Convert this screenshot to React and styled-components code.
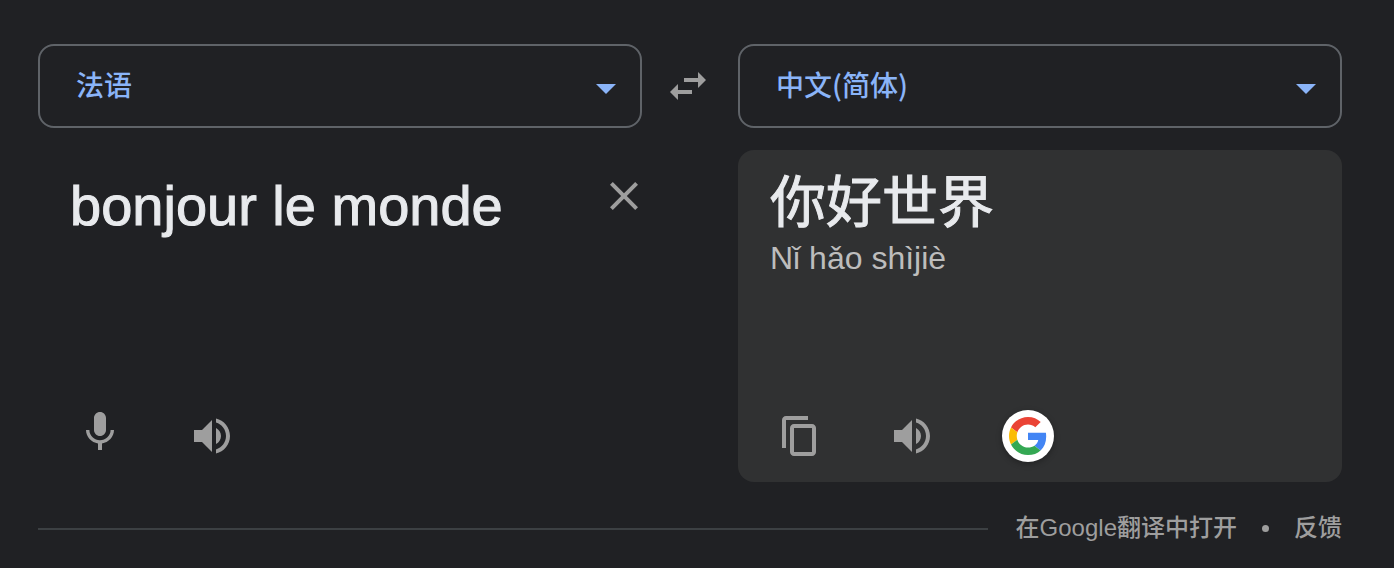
import React, { useState } from "react";
import styled, { createGlobalStyle } from "styled-components";

const GlobalStyle = createGlobalStyle`
  *, *::before, *::after { box-sizing: border-box; }
  body {
    margin: 0;
    background: #202124;
    color: #e8eaed;
    font-family: "Liberation Sans", "Noto Sans CJK SC", sans-serif;
  }
`;

const Page = styled.main`
  padding: 44px 52px 20px 38px;
`;

const Columns = styled.div`
  display: grid;
  grid-template-columns: minmax(0, 1fr) 96px minmax(0, 1fr);
  row-gap: 22px;
`;

const Picker = styled.label`
  position: relative;
  display: block;
`;

const Select = styled.select`
  display: block;
  width: 100%;
  height: 84px;
  padding: 0 80px 4px 36px;
  border: 2px solid #5f6368;
  border-radius: 16px;
  appearance: none;
  background: transparent;
  color: #8ab4f8;
  font-family: "Noto Sans CJK SC", sans-serif;
  font-size: 28px;
  font-weight: 500;
  cursor: pointer;

  option { background: #303132; }
`;

const Arrow = styled.svg`
  position: absolute;
  top: 40px;
  right: 26px;
  width: 20px;
  height: 10px;
  fill: #8ab4f8;
  pointer-events: none;
`;

const IconButton = styled.button`
  display: flex;
  align-items: center;
  justify-content: center;
  flex: none;
  width: 48px;
  height: 48px;
  padding: 0;
  border: 0;
  background: transparent;
  color: #9e9e9e;
  cursor: pointer;
`;

const SwapCell = styled.div`
  display: flex;
  align-items: center;
  justify-content: center;
  padding-right: 4px;
`;

const Glyph = styled.svg`
  display: block;
  width: 48px;
  height: 48px;
  fill: currentColor;
`;

const Panel = styled.section`
  grid-column: ${(p) => (p.$result ? 3 : 1)};
  display: flex;
  flex-direction: column;
  justify-content: space-between;
  min-height: 332px;
  padding: ${(p) => (p.$result ? "16px 32px 20px" : "22px 0 20px 32px")};
  border-radius: 16px;
  background: ${(p) => (p.$result ? "#303132" : "transparent")};
`;

const SourceRow = styled.div`
  display: flex;
  align-items: flex-start;
`;

const SourceText = styled.textarea`
  flex: 1;
  min-width: 0;
  height: 192px;
  padding: 0;
  border: 0;
  outline: 0;
  resize: none;
  background: transparent;
  color: #e8eaed;
  font-family: "Liberation Sans", "Noto Sans CJK SC", sans-serif;
  font-size: 56px;
  line-height: 68px;
  -webkit-text-stroke: 1px currentColor;
`;

const ClearSlot = styled.div`
  margin-right: -6px;
`;

const Translation = styled.p`
  margin: 0;
  font-family: "Noto Sans CJK SC", sans-serif;
  font-size: 56px;
  line-height: 64px;
  -webkit-text-stroke: 1px currentColor;
`;

const Pinyin = styled.p`
  margin: 8px 0 0;
  color: #bdbdbd;
  font-size: 32px;
  line-height: 40px;
`;

const Tools = styled.div`
  display: flex;
  align-items: center;
  gap: 64px;
  height: 52px;
  padding-left: 6px;
`;

const MicButton = styled(IconButton)`
  align-self: flex-start;
  height: 44px;
`;

const GoogleButton = styled(IconButton)`
  width: 52px;
  height: 52px;
  margin-left: 2px;
  border-radius: 50%;
  background: #fff;
  box-shadow: 0 2px 6px rgba(0, 0, 0, 0.3);
`;

const Footer = styled.footer`
  display: flex;
  align-items: center;
  gap: 28px;
  padding-top: 28px;
`;

const Rule = styled.hr`
  flex: 1;
  height: 2px;
  margin: 2px 0 0;
  border: 0;
  background: #3c4043;
`;

const Links = styled.nav`
  display: flex;
  align-items: center;
  gap: 25px;
  color: #9e9e9e;
  font-size: 24px;
  font-weight: 500;
  line-height: 36px;
`;

const FooterLink = styled.a`
  color: inherit;
  text-decoration: none;
`;

const Dot = styled.span`
  width: 7px;
  height: 7px;
  border-radius: 50%;
  background: #9e9e9e;
`;

const paths = {
  swap: "M6.99 11L3 15l3.99 4v-3H14v-2H6.99v-3zM21 9l-3.99-4v3H10v2h7.01v3L21 9z",
  close:
    "M19 6.41L17.59 5 12 10.59 6.41 5 5 6.41 10.59 12 5 17.59 6.41 19 12 13.41 17.59 19 19 17.59 13.41 12z",
  mic: "M12 14c1.66 0 3-1.34 3-3V5c0-1.66-1.34-3-3-3S9 3.34 9 5v6c0 1.66 1.34 3 3 3zm5.3-3c0 3-2.54 5.1-5.3 5.1S6.7 14 6.7 11H5c0 3.41 2.72 6.23 6 6.72V21h2v-3.28c3.28-.48 6-3.3 6-6.72h-1.7z",
  volume:
    "M3 9v6h4l5 5V4L7 9H3zm13.5 3c0-1.77-1.02-3.29-2.5-4.03v8.05c1.48-.73 2.5-2.25 2.5-4.02zM14 3.23v2.06c2.89.86 5 3.54 5 6.71s-2.11 5.85-5 6.71v2.06c4.01-.91 7-4.49 7-8.77s-2.99-7.86-7-8.77z",
  copy: "M16 2H5c-1.1 0-2 .9-2 2v14h2V4h11V2zm2 4H9c-1.1 0-2 .9-2 2v12c0 1.1.9 2 2 2h9c1.1 0 2-.9 2-2V8c0-1.1-.9-2-2-2zm0 14H9V8h9v12z",
};

const Icon = ({ name }) => (
  <Glyph viewBox="0 0 24 24" aria-hidden="true">
    <path d={paths[name]} />
  </Glyph>
);

const GoogleLogo = () => (
  <svg width="38" height="38" viewBox="0 0 48 48" aria-hidden="true">
    <path fill="#EA4335" d="M24 9.5c3.54 0 6.71 1.22 9.21 3.6l6.85-6.85C35.9 2.38 30.47 0 24 0 14.62 0 6.51 5.38 2.56 13.22l7.98 6.19C12.43 13.72 17.74 9.5 24 9.5z" />
    <path fill="#4285F4" d="M46.98 24.55c0-1.57-.15-3.09-.38-4.55H24v9.02h12.94c-.58 2.96-2.26 5.48-4.78 7.18l7.73 6c4.51-4.18 7.09-10.36 7.09-17.65z" />
    <path fill="#FBBC05" d="M10.53 28.59c-.48-1.45-.76-2.99-.76-4.59s.27-3.14.76-4.59l-7.98-6.19C.92 16.46 0 20.12 0 24c0 3.88.92 7.54 2.56 10.78l7.97-6.19z" />
    <path fill="#34A853" d="M24 48c6.48 0 11.93-2.13 15.89-5.81l-7.73-6c-2.15 1.45-4.92 2.3-8.16 2.3-6.26 0-11.57-4.22-13.47-9.91l-7.98 6.19C6.51 42.62 14.62 48 24 48z" />
  </svg>
);

const LanguagePicker = ({ label, value, onChange }) => (
  <Picker>
    <Select aria-label={label} value={value} onChange={(e) => onChange(e.target.value)}>
      <option value="fr">法语</option>
      <option value="zh">中文(简体)</option>
    </Select>
    <Arrow viewBox="0 0 20 10" aria-hidden="true">
      <path d="M0 0h20L10 10z" />
    </Arrow>
  </Picker>
);

export default function App() {
  const [from, setFrom] = useState("fr");
  const [to, setTo] = useState("zh");
  const [text, setText] = useState("bonjour le monde");

  const swap = () => {
    setFrom(to);
    setTo(from);
  };

  return (
    <>
      <GlobalStyle />
      <Page>
        <Columns>
          <LanguagePicker label="源语言" value={from} onChange={setFrom} />
          <SwapCell>
            <IconButton type="button" aria-label="交换语言" onClick={swap}>
              <Icon name="swap" />
            </IconButton>
          </SwapCell>
          <LanguagePicker label="目标语言" value={to} onChange={setTo} />

          <Panel>
            <SourceRow>
              <SourceText
                aria-label="原文"
                spellCheck={false}
                value={text}
                onChange={(e) => setText(e.target.value)}
              />
              <ClearSlot>
                <IconButton type="button" aria-label="清除" onClick={() => setText("")}>
                  <Icon name="close" />
                </IconButton>
              </ClearSlot>
            </SourceRow>
            <Tools>
              <MicButton type="button" aria-label="语音输入">
                <Icon name="mic" />
              </MicButton>
              <IconButton type="button" aria-label="朗读原文">
                <Icon name="volume" />
              </IconButton>
            </Tools>
          </Panel>

          <Panel $result>
            <div>
              <Translation lang="zh-CN">你好世界</Translation>
              <Pinyin>Nǐ hǎo shìjiè</Pinyin>
            </div>
            <Tools>
              <IconButton type="button" aria-label="复制">
                <Icon name="copy" />
              </IconButton>
              <IconButton type="button" aria-label="朗读译文">
                <Icon name="volume" />
              </IconButton>
              <GoogleButton type="button" aria-label="用 Google 搜索">
                <GoogleLogo />
              </GoogleButton>
            </Tools>
          </Panel>
        </Columns>

        <Footer>
          <Rule />
          <Links>
            <FooterLink href="#translate">在Google翻译中打开</FooterLink>
            <Dot />
            <FooterLink href="#feedback">反馈</FooterLink>
          </Links>
        </Footer>
      </Page>
    </>
  );
}
